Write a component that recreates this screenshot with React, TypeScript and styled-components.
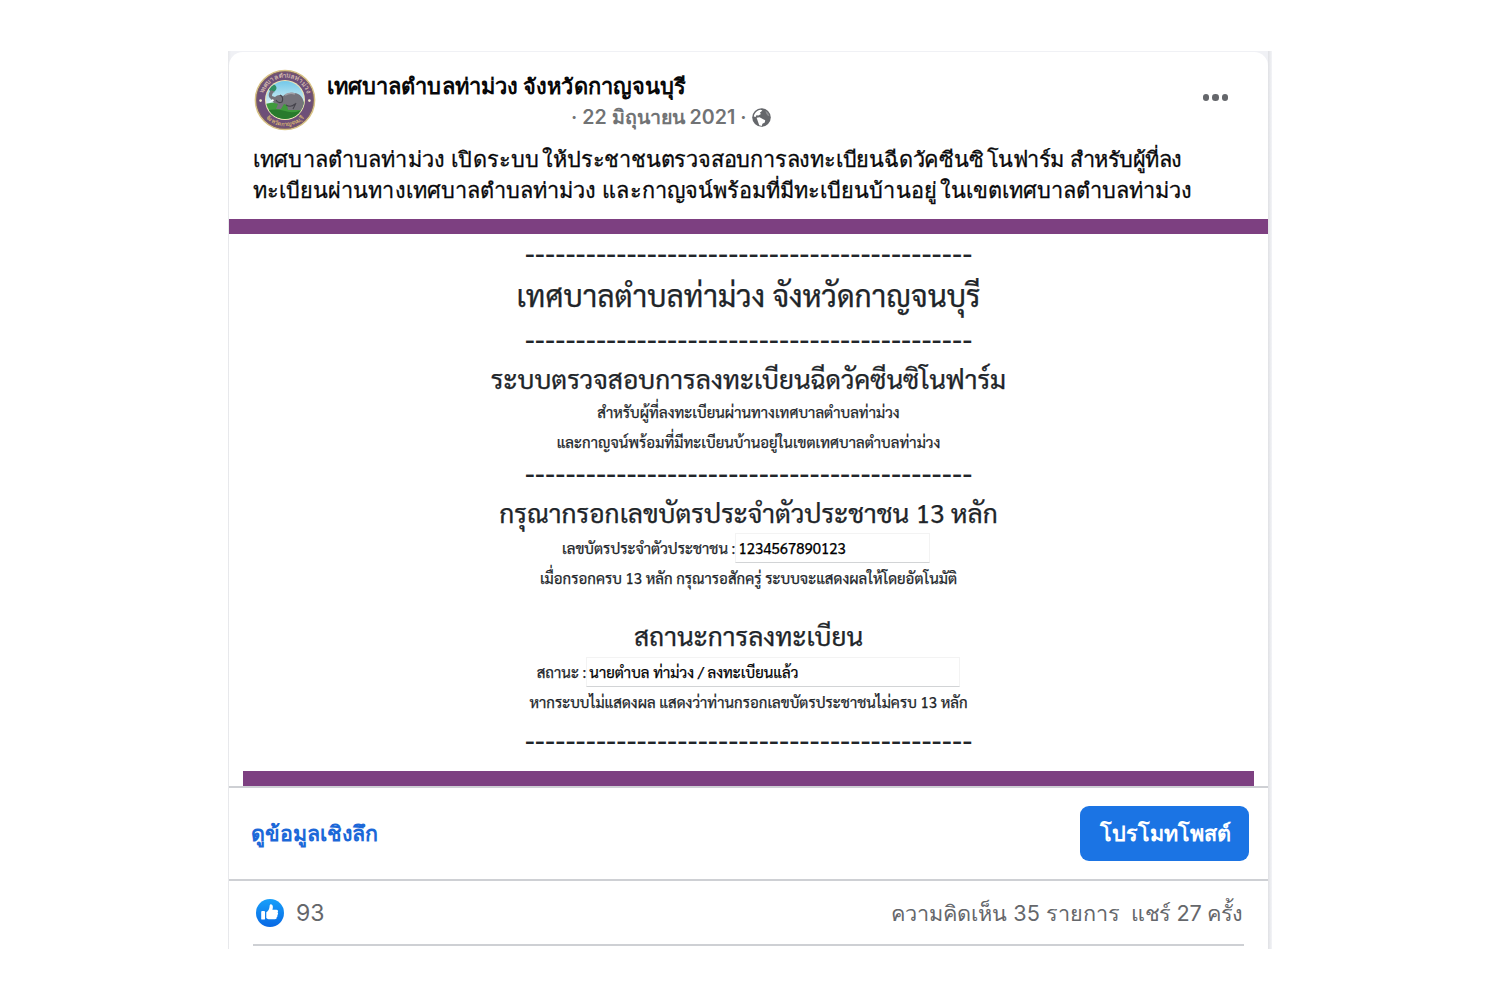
import React from "react";
import styled, { createGlobalStyle } from "styled-components";

const GlobalStyle = createGlobalStyle`
  *, *::before, *::after { box-sizing: border-box; }
  body { margin: 0; background: #fff; }
  h1, h2, p { margin: 0; font-weight: 400; }
`;

const Page = styled.main`
  width: 1500px;
  height: 1000px;
  padding: 51px 228px;
  background: #fff;
  font-family: Inter, "Liberation Sans", sans-serif;
  color: #080809;
  white-space: nowrap;
`;

const Frame = styled.div`
  width: 1044px;
  height: 898px;
  padding: 1px 4px 0 1px;
  background: linear-gradient(90deg, #e6e7ea 0, #f0f1f5 3px, #f0f1f5 calc(100% - 4px), #e0e1e5 calc(100% - 4px), #f3f4f7 100%);
`;

const Card = styled.article`
  display: flex;
  flex-direction: column;
  height: 897px;
  border-radius: 14px 14px 0 0;
  background: #fff;
`;

const Header = styled.header`
  display: flex;
  align-items: flex-start;
  height: 90px;
  padding: 17px 40px 0 25px;
`;

const Seal = styled.svg`
  width: 62px;
  height: 62px;
  flex: none;
`;

const Byline = styled.div`
  flex: 1;
  padding-left: 11px;
`;

const PageName = styled.h2`
  height: 32px;
  font-size: 21.85px;
  font-weight: 700;
  letter-spacing: 0.07px;
  line-height: 34px;
`;

const Meta = styled.div`
  display: flex;
  align-items: center;
  gap: 5px;
  height: 31px;
  padding: 1px 0 0 244px;
  color: #717375;
  font-size: 19.6px;
  font-weight: 600;
  line-height: 30px;
`;

const Globe = styled.svg`
  width: 19px;
  height: 19px;
  margin-left: 1px;
`;

const MoreButton = styled.button`
  display: flex;
  gap: 3px;
  margin-top: 25px;
  padding: 0;
  border: 0;
  background: none;

  i {
    width: 6.5px;
    height: 6.5px;
    border-radius: 50%;
    background: #65676b;
  }
`;

const Message = styled.div`
  height: 77px;
  padding: 2px 0 0 24px;
  font-size: 21.7px;
  line-height: 30.5px;
  -webkit-text-stroke: 0.3px currentColor;
`;

const Phrase = styled.span<{ $track: number; $gap?: boolean }>`
  padding-left: ${p => (p.$gap ? 3 : 0)}px;
  letter-spacing: ${p => p.$track}px;
`;

const Stripe = styled.div<{ $inset?: number }>`
  flex: none;
  height: 15px;
  margin: 0 ${p => p.$inset ?? 0}px;
  background: #7d4081;
`;

const Form = styled.section`
  display: flex;
  flex-direction: column;
  align-items: center;
  height: 537px;
  padding-top: 2px;
  font-family: Sarabun, "TH Sarabun New", Norasi, "Noto Sans", sans-serif;
  color: #212529;
  -webkit-text-stroke: 0.25px currentColor;
`;

const Dashes = styled.div<{ $above?: number }>`
  height: 33px;
  margin-top: ${p => p.$above ?? 0}px;
  font-family: "Noto Sans", sans-serif;
  font-size: 31.6px;
  line-height: 32px;
  -webkit-text-stroke: 0;
`;

const Title = styled.h1`
  height: 53px;
  font-size: 29.9px;
  line-height: 51px;
`;

const Heading = styled.h2<{ $above?: number }>`
  height: 42px;
  margin-top: ${p => p.$above ?? 0}px;
  font-size: 26.2px;
  line-height: 46px;
`;

const Note = styled.p`
  height: 30px;
  font-size: 15px;
  line-height: 30px;
`;

const Field = styled.label<{ $above: number; $after?: number }>`
  display: flex;
  height: 30px;
  margin: ${p => p.$above}px ${p => p.$after ?? 0}px 0 0;
  font-size: 15px;
  line-height: 30px;
`;

const Value = styled.output<{ $width: number }>`
  width: ${p => p.$width}px;
  height: 29.5px;
  padding-left: 2px;
  border: 1px solid #f3f3f3;
  border-bottom: 1.5px solid #d2d4d6;
  color: #000;
  line-height: 28px;
`;

const Insights = styled.div`
  display: flex;
  align-items: center;
  justify-content: space-between;
  height: 95px;
  padding: 0 19px 0 22px;
  border-top: 2px solid #ced0d4;
  border-bottom: 2px solid #ced0d4;
`;

const InsightsLink = styled.a`
  padding-bottom: 1px;
  color: #1c68d8;
  font-size: 21.4px;
  font-weight: 600;
`;

const Promote = styled.button`
  width: 169px;
  height: 55px;
  padding: 0 0 1px 1px;
  border: 0;
  border-radius: 9px;
  background: #1b74e4;
  color: #fff;
  font: 600 21.56px Inter, "Liberation Sans", sans-serif;
`;

const Stats = styled.footer`
  display: flex;
  align-items: center;
  height: 65px;
  margin: 0 24px;
  padding: 1px 1px 0 3px;
  border-bottom: 2px solid #ced0d4;
  color: #65676b;
  font-size: 21.65px;
`;

const LikeBadge = styled.svg`
  width: 28px;
  height: 28px;
`;

const Count = styled.span`
  flex: 1;
  padding-left: 12px;
  font-size: 23px;
`;

const Shares = styled.span`
  padding-left: 11px;
  letter-spacing: -0.35px;
`;

const dashes = "-".repeat(44);

function TownSeal() {
  return (
    <Seal viewBox="0 0 62 62">
      <defs>
        <linearGradient id="sky" x1="0" y1="0" x2="0" y2="1">
          <stop offset="0" stopColor="#6fc6e8" />
          <stop offset="0.6" stopColor="#d5f0f4" />
        </linearGradient>
        <clipPath id="scene"><circle cx="31" cy="31" r="19" /></clipPath>
        <path id="arcTop" d="M8.5 31a22.5 22.5 0 0 1 45 0" />
        <path id="arcBottom" d="M4.8 31a26.2 26.2 0 0 0 52.4 0" />
      </defs>
      <circle cx="31" cy="31" r="29.6" fill="#6d4f78" stroke="#d8c384" strokeWidth="1.5" />
      <circle cx="31" cy="31" r="28.3" fill="none" stroke="#8d6f4a" strokeWidth="0.5" />
      <circle cx="31" cy="31" r="20" fill="#f0e6b4" />
      <g clipPath="url(#scene)">
        <rect x="11" y="11" width="40" height="40" fill="url(#sky)" />
        <path d="M11 35q10-3 20-1t20-2v20H11z" fill="#3f9a3c" />
        <path d="M11 42q12-3 20 0t20-2v12H11z" fill="#287a2c" />
        <path d="M14 19q3-5 7-3q3 3 0 6q-4 3-7-3z" fill="#2f8f63" />
        <path d="M17 21c-3 3-3 7 0 9l3 4 4 1-2 5h5l3-5 3 1 1 5h11l4 1c2-1 2-3 1-6 0-7-4-12-10-12-4-1-8 1-11 3-3-2-6-1-8 1l-3-1c0-2 1-4 3-4z" fill="#75737b" />
        <path d="M26 26q4 2 2 7-4 2-6-2M32 36q5 3 9-1M39 40l3-6" fill="none" stroke="#45434c" strokeWidth="1.1" />
        <path d="M31 26q5-3 10-1" fill="none" stroke="#a09fa6" strokeWidth="1.6" />
        <path d="M19 30l-4 3 5-1" fill="#fff" />
      </g>
      <circle cx="6.6" cy="31.6" r="1.3" fill="#f2e7c4" />
      <circle cx="55.4" cy="31.6" r="1.3" fill="#f2e7c4" />
      <text fontSize="6.5" fontWeight="600" fill="#cdb4a8" textAnchor="middle"><textPath href="#arcTop" startOffset="50%">เทศบาลตำบลท่าม่วง</textPath></text>
      <text fontSize="5.6" fontWeight="600" fill="#d2b070" textAnchor="middle"><textPath href="#arcBottom" startOffset="50%">จังหวัดกาญจนบุรี</textPath></text>
    </Seal>
  );
}

export default function App() {
  return (
    <>
      <GlobalStyle />
      <Page>
        <Frame>
          <Card>
            <Header>
              <TownSeal />
              <Byline>
                <PageName>เทศบาลตำบลท่าม่วง จังหวัดกาญจนบุรี</PageName>
                <Meta>
                  <span>·</span>
                  <span>22 มิถุนายน 2021</span>
                  <span>·</span>
                  <Globe viewBox="0 0 19 19">
                    <circle cx="9.5" cy="9.5" r="9.3" fill="#65676b" />
                    <path d="M1.8 8.6C2.4 5 5 2.4 8.6 1.8l1.8.8-2.6 2.2 1.2 1.2-2.6 1.4-2-.2-.8 1.8z" fill="#fff" />
                    <path d="M4.6 9.8l3-.6 3.6 2 2 1-.4 2.400-2.400 1.200-.6 2.200-2.600-.8-1.200-3.400z" fill="#fff" />
                    <path d="M13.4 2.8c2.2 1.2 3.6 3 4 5.4l-1.8-.8-1.4-2z" fill="#8d8f92" />
                  </Globe>
                </Meta>
              </Byline>
              <MoreButton aria-label="more"><i /><i /><i /></MoreButton>
            </Header>
            <Message>
              <p>
                <Phrase $track={0.15}>เทศบาลตำบลท่าม่วง เปิดระบบ</Phrase>
                <Phrase $gap $track={-0.2}>ให้ประชาชนตรวจสอบการลงทะเบียนฉีดวัคซีนซิ</Phrase>
                <Phrase $gap $track={-0.45}>โนฟาร์ม สำหรับผู้ที่ลง</Phrase>
              </p>
              <p>
                <Phrase $track={0.05}>ทะเบียนผ่านทางเทศบาลตำบลท่าม่วง และกาญจน์พร้อมที่มีทะเบียนบ้านอยู่</Phrase>
                <Phrase $gap $track={0}>ในเขตเทศบาลตำบลท่าม่วง</Phrase>
              </p>
            </Message>
            <Stripe />
            <Form>
              <Dashes>{dashes}</Dashes>
              <Title>เทศบาลตำบลท่าม่วง จังหวัดกาญจนบุรี</Title>
              <Dashes>{dashes}</Dashes>
              <Heading>ระบบตรวจสอบการลงทะเบียนฉีดวัคซีนซิโนฟาร์ม</Heading>
              <Note>สำหรับผู้ที่ลงทะเบียนผ่านทางเทศบาลตำบลท่าม่วง</Note>
              <Note>และกาญจน์พร้อมที่มีทะเบียนบ้านอยู่ในเขตเทศบาลตำบลท่าม่วง</Note>
              <Dashes $above={-1}>{dashes}</Dashes>
              <Heading>กรุณากรอกเลขบัตรประจำตัวประชาชน 13 หลัก</Heading>
              <Field $above={2} $after={5}>เลขบัตรประจำตัวประชาชน :<Value $width={194.5}>1234567890123</Value></Field>
              <Note>เมื่อกรอกครบ 13 หลัก กรุณารอสักครู่ ระบบจะแสดงผลให้โดยอัตโนมัติ</Note>
              <Heading $above={18.5}>สถานะการลงทะเบียน</Heading>
              <Field $above={3.5}>สถานะ :<Value $width={374}>นายตำบล ท่าม่วง / ลงทะเบียนแล้ว</Value></Field>
              <Note>หากระบบไม่แสดงผล แสดงว่าท่านกรอกเลขบัตรประชาชนไม่ครบ 13 หลัก</Note>
              <Dashes $above={6}>{dashes}</Dashes>
            </Form>
            <Stripe $inset={14} />
            <Insights>
              <InsightsLink>ดูข้อมูลเชิงลึก</InsightsLink>
              <Promote>โปรโมทโพสต์</Promote>
            </Insights>
            <Stats>
              <LikeBadge viewBox="0 0 28 28">
                <defs>
                  <linearGradient id="like" x1="0" y1="0" x2="0" y2="1">
                    <stop offset="0" stopColor="#18a0fa" />
                    <stop offset="1" stopColor="#0868e4" />
                  </linearGradient>
                </defs>
                <circle cx="14" cy="14" r="14" fill="url(#like)" />
                <rect x="5.2" y="12" width="3.8" height="8.6" rx="0.9" fill="#fff" />
                <path d="M10.3 13.2c2-1.2 3-3 3.2-5.2.1-2.4 1-2.8 1.9-2.6 1.9.5 1.7 3.4 1 5.3h4c1.6 0 2.2 1.600 1.200 2.700.8.9.6 2-.3 2.600.5 1 .1 1.900-.7 2.300.3 1-.4 2-1.700 2h-5.200c-1.500 0-2.500-.5-3.400-1.300z" fill="#fff" />
              </LikeBadge>
              <Count>93</Count>
              <span>ความคิดเห็น 35 รายการ</span>
              <Shares>แชร์ 27 ครั้ง</Shares>
            </Stats>
          </Card>
        </Frame>
      </Page>
    </>
  );
}
